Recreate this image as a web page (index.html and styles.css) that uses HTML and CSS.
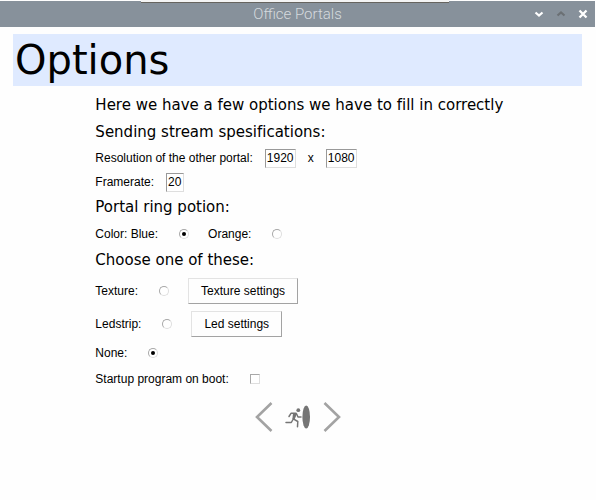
FILE: index.html
```html
<!DOCTYPE html>
<html lang="en">
<head>
  <meta charset="UTF-8">
  <meta name="viewport" content="width=device-width, initial-scale=1.0">
  <title>Office Portals</title>
  <link rel="stylesheet" href="styles.css">
</head>
<body>
  <header class="titlebar">
    <div class="titlebar-edge"></div>
    <span class="titlebar-text">Office Portals</span>
    <div class="window-controls">
      <button type="button" aria-label="Minimize">
        <svg width="10" height="10" viewBox="0 0 10 10"><path d="M1.5 3.5 L5 6.5 L8.5 3.5" stroke="#fff" stroke-width="2.2" fill="none"/></svg>
      </button>
      <button type="button" aria-label="Maximize">
        <svg width="10" height="10" viewBox="0 0 10 10"><path d="M1.5 6.5 L5 3.5 L8.5 6.5" stroke="#6b7074" stroke-width="2.2" fill="none"/></svg>
      </button>
      <button type="button" aria-label="Close">
        <svg width="10" height="10" viewBox="0 0 10 10"><path d="M1.5 1.5 L8.5 8.5 M8.5 1.5 L1.5 8.5" stroke="#fff" stroke-width="2.3" fill="none"/></svg>
      </button>
    </div>
  </header>
  <h1 class="page-title">Options</h1>
  <main>
    <form class="options">
      <h2>Here we have a few options we have to fill in correctly</h2>

      <h2>Sending stream spesifications:</h2>
      <div class="row field-row">
        <label for="res-width">Resolution of the other portal:</label>
        <input type="text" class="number" id="res-width" value="1920">
        <label for="res-height">x</label>
        <input type="text" class="number" id="res-height" value="1080">
      </div>
      <div class="row field-row">
        <label for="framerate">Framerate:</label>
        <input type="text" class="number short" id="framerate" value="20">
      </div>

      <h2>Portal ring potion:</h2>
      <div class="row">
        <label for="color-blue">Color: Blue:</label>
        <input type="radio" name="color" id="color-blue" checked>
        <label for="color-orange">Orange:</label>
        <input type="radio" name="color" id="color-orange">
      </div>

      <h2>Choose one of these:</h2>
      <div class="row button-row">
        <label for="texture">Texture:</label>
        <input type="radio" name="effect" id="texture">
        <button type="button" class="settings">Texture settings</button>
      </div>
      <div class="row button-row">
        <label for="ledstrip">Ledstrip:</label>
        <input type="radio" name="effect" id="ledstrip">
        <button type="button" class="settings">Led settings</button>
      </div>
      <div class="row">
        <label for="none">None:</label>
        <input type="radio" name="effect" id="none" checked>
      </div>
      <div class="row">
        <label for="boot">Startup program on boot:</label>
        <input type="checkbox" id="boot">
      </div>
    </form>
    <nav class="pager">
      <button type="button" aria-label="Previous">
        <svg width="18" height="32" viewBox="0 0 18 32"><path d="M16.5 2 L2 16 L16.5 30" stroke="#a3a3a3" stroke-width="2.6" fill="none"/></svg>
      </button>
      <button type="button" aria-label="Enter portal">
        <svg width="26" height="24" viewBox="0 0 26 24">
          <ellipse cx="21.2" cy="12" rx="3.8" ry="11.5" fill="#757575"/>
          <circle cx="13.3" cy="5.2" r="1.9" fill="#757575"/>
          <path d="M4 11.5 L6 8.3 L11 8.3 L8.3 13.8 L12.8 16.5 L12.5 21.8 M8.3 14 L6.3 17.5 L1 17.5 M11.5 8.8 L13 12 L16 12" stroke="#757575" stroke-width="1.5" fill="none" stroke-linecap="round" stroke-linejoin="round"/>
          <path d="M8 8.2 L12 8.2 L9.8 14 L7.4 14 Z" fill="#757575"/>
        </svg>
      </button>
      <button type="button" aria-label="Next">
        <svg width="18" height="32" viewBox="0 0 18 32"><path d="M1.5 2 L16 16 L1.5 30" stroke="#a3a3a3" stroke-width="2.6" fill="none"/></svg>
      </button>
    </nav>
  </main>
</body>
</html>
```
FILE: styles.css
```css
* {
  box-sizing: border-box;
}

body {
  margin: 0;
  background-color: #fefefe;
  color: #000;
  font-family: "Liberation Sans", Arial, sans-serif;
  font-size: 12px;
}

button {
  padding: 0;
  border: none;
  background: none;
  font: inherit;
  color: inherit;
}

svg {
  display: block;
}

.titlebar {
  position: relative;
  display: grid;
  grid-template-columns: 1fr auto 1fr;
  align-items: center;
  height: 26px;
  margin: 1px 1px 0 0;
  background-color: #87919b;
}

/* window peeking out behind the title bar */
.titlebar-edge {
  position: absolute;
  top: -1px;
  left: 141px;
  right: 146px;
  height: 3px;
  background-color: #f4f4f4;
  border-bottom: 1px solid #66645f;
}

.titlebar-text {
  grid-column: 2;
  font-family: Roboto, sans-serif;
  font-size: 15px;
  font-weight: 300;
  color: #d5dade;
}

.window-controls {
  display: flex;
  justify-content: flex-end;
  gap: 12px;
  padding-right: 7px;
}

.page-title {
  margin: 7px 14px 0 13px;
  padding: 0 2px;
  background-color: #dfeaff;
  font-family: "DejaVu Sans", sans-serif;
  font-size: 40px;
  font-weight: 400;
  line-height: 52px;
}

.options {
  padding: 6px 14px 0 16%;
}

.options h2 {
  margin: 0;
  font-family: "DejaVu Sans", sans-serif;
  font-size: 15px;
  font-weight: 400;
  font-variant-ligatures: none;
  line-height: 27px;
}

.row {
  display: flex;
  align-items: center;
  height: 26px;
}

.field-row {
  height: 24px;
  gap: 12px;
}

.button-row {
  height: 33px;
}

.number {
  width: 31px;
  height: 19px;
  margin: 0;
  padding: 0 1px;
  border: 1px solid #dedede;
  border-top-color: #999;
  border-left-color: #999;
  background-color: #fff;
  font: inherit;
}

.short {
  width: 18px;
}

input[type="radio"],
input[type="checkbox"] {
  appearance: none;
  display: grid;
  place-items: center;
  width: 10px;
  height: 10px;
  margin: 0 19px 0 21px;
  border: 1px solid #dedede;
  border-top-color: #a8a8a8;
  border-left-color: #a8a8a8;
  background-color: #fff;
}

input[type="radio"] {
  border-radius: 50%;
}

input[type="radio"]:checked::before {
  content: "";
  width: 4px;
  height: 4px;
  border-radius: 50%;
  background-color: #000;
}

.settings {
  height: 26px;
  padding: 0 12px;
  border: 1px solid #e3e3e3;
  border-right-color: #a3a3a3;
  border-bottom-color: #a3a3a3;
}

.pager {
  display: flex;
  justify-content: center;
  align-items: center;
  gap: 12px;
  height: 50px;
}
```
